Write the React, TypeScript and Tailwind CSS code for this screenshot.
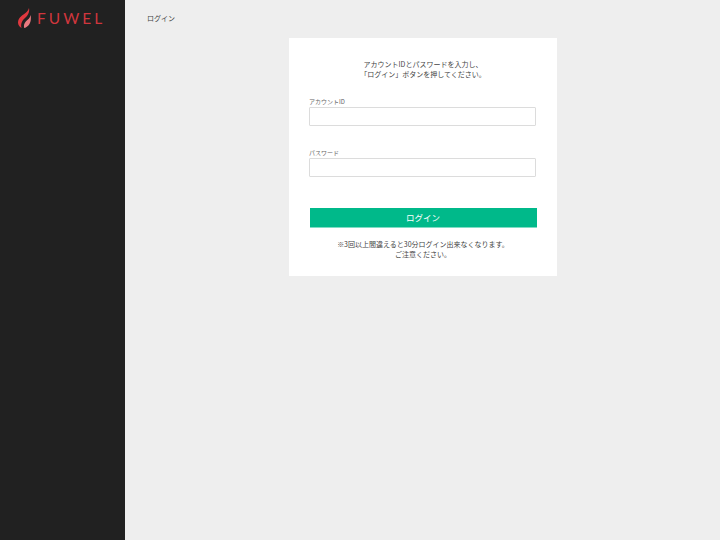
const font = { fontFamily: '"Noto Sans CJK JP", "Liberation Sans", sans-serif' };

function Logo() {
  return (
    <svg width="13" height="20" viewBox="0 0 13 20" className="shrink-0">
      <path d="M11 0 C10.5 3 7.5 5 4 7.5 C1 9.8 0 12 0 14.5 C0 17 1.5 19 3.5 20 C2.5 16 4 12.5 7 10 C10 7.5 11.8 4 11 0 Z" fill="#e0383f" />
      <path d="M12.6 7 C12.2 10 9.8 11.5 7.8 13.5 C6.2 15.2 5.5 17.5 6.2 20 C9.5 19.3 12 16.5 12.7 12.5 C13 10.5 13 8.5 12.6 7 Z" fill="#ea7a80" />
    </svg>
  );
}

function Field({ label }: { label: string }) {
  return (
    <div className="flex flex-col">
      <label className="text-[6px] leading-[9px] text-[#666] h-[9px] mb-px">{label}</label>
      <input className="w-[227px] h-[19px] bg-white border border-[#dcdcdc] rounded-[1px] outline-none" />
    </div>
  );
}

export default function App() {
  return (
    <div className="flex w-[720px] h-[540px] bg-[#eeeeee] overflow-hidden" style={font}>
      <aside className="w-[125px] h-full bg-[#212121] shrink-0 flex items-start pl-[18px] pt-[8px] gap-[6px]">
        <Logo />
        <span className="text-[#d0363d] text-[15.5px] leading-[20px] tracking-[3px] font-normal" style={{ fontFamily: '"Lato", sans-serif' }}>FUWEL</span>
      </aside>
      <main className="flex-1 flex flex-col">
        <div className="h-[38px] pl-[22px] pt-[12px] text-[7px] leading-[12px] text-[#444]">ログイン</div>
        <div className="w-[268px] h-[238px] ml-[164px] bg-white flex flex-col items-center pt-[21px]">
          <p className="text-[7px] leading-[10px] text-[#444] text-center">
            アカウントIDとパスワードを入力し、<br />「ログイン」ボタンを押してください。
          </p>
          <div className="flex flex-col gap-[22px] mt-[18px] -ml-[1px]">
            <Field label="アカウントID" />
            <Field label="パスワード" />
          </div>
          <button className="w-[227px] h-[20px] mt-[31px] bg-[#00b98a] border-b border-[#7fdcc4] text-white text-[8.5px] leading-[19px]">ログイン</button>
          <p className="text-[7px] leading-[10px] text-[#444] text-center mt-[11px]">
            ※3回以上間違えると30分ログイン出来なくなります。<br />ご注意ください。
          </p>
        </div>
      </main>
    </div>
  );
}
